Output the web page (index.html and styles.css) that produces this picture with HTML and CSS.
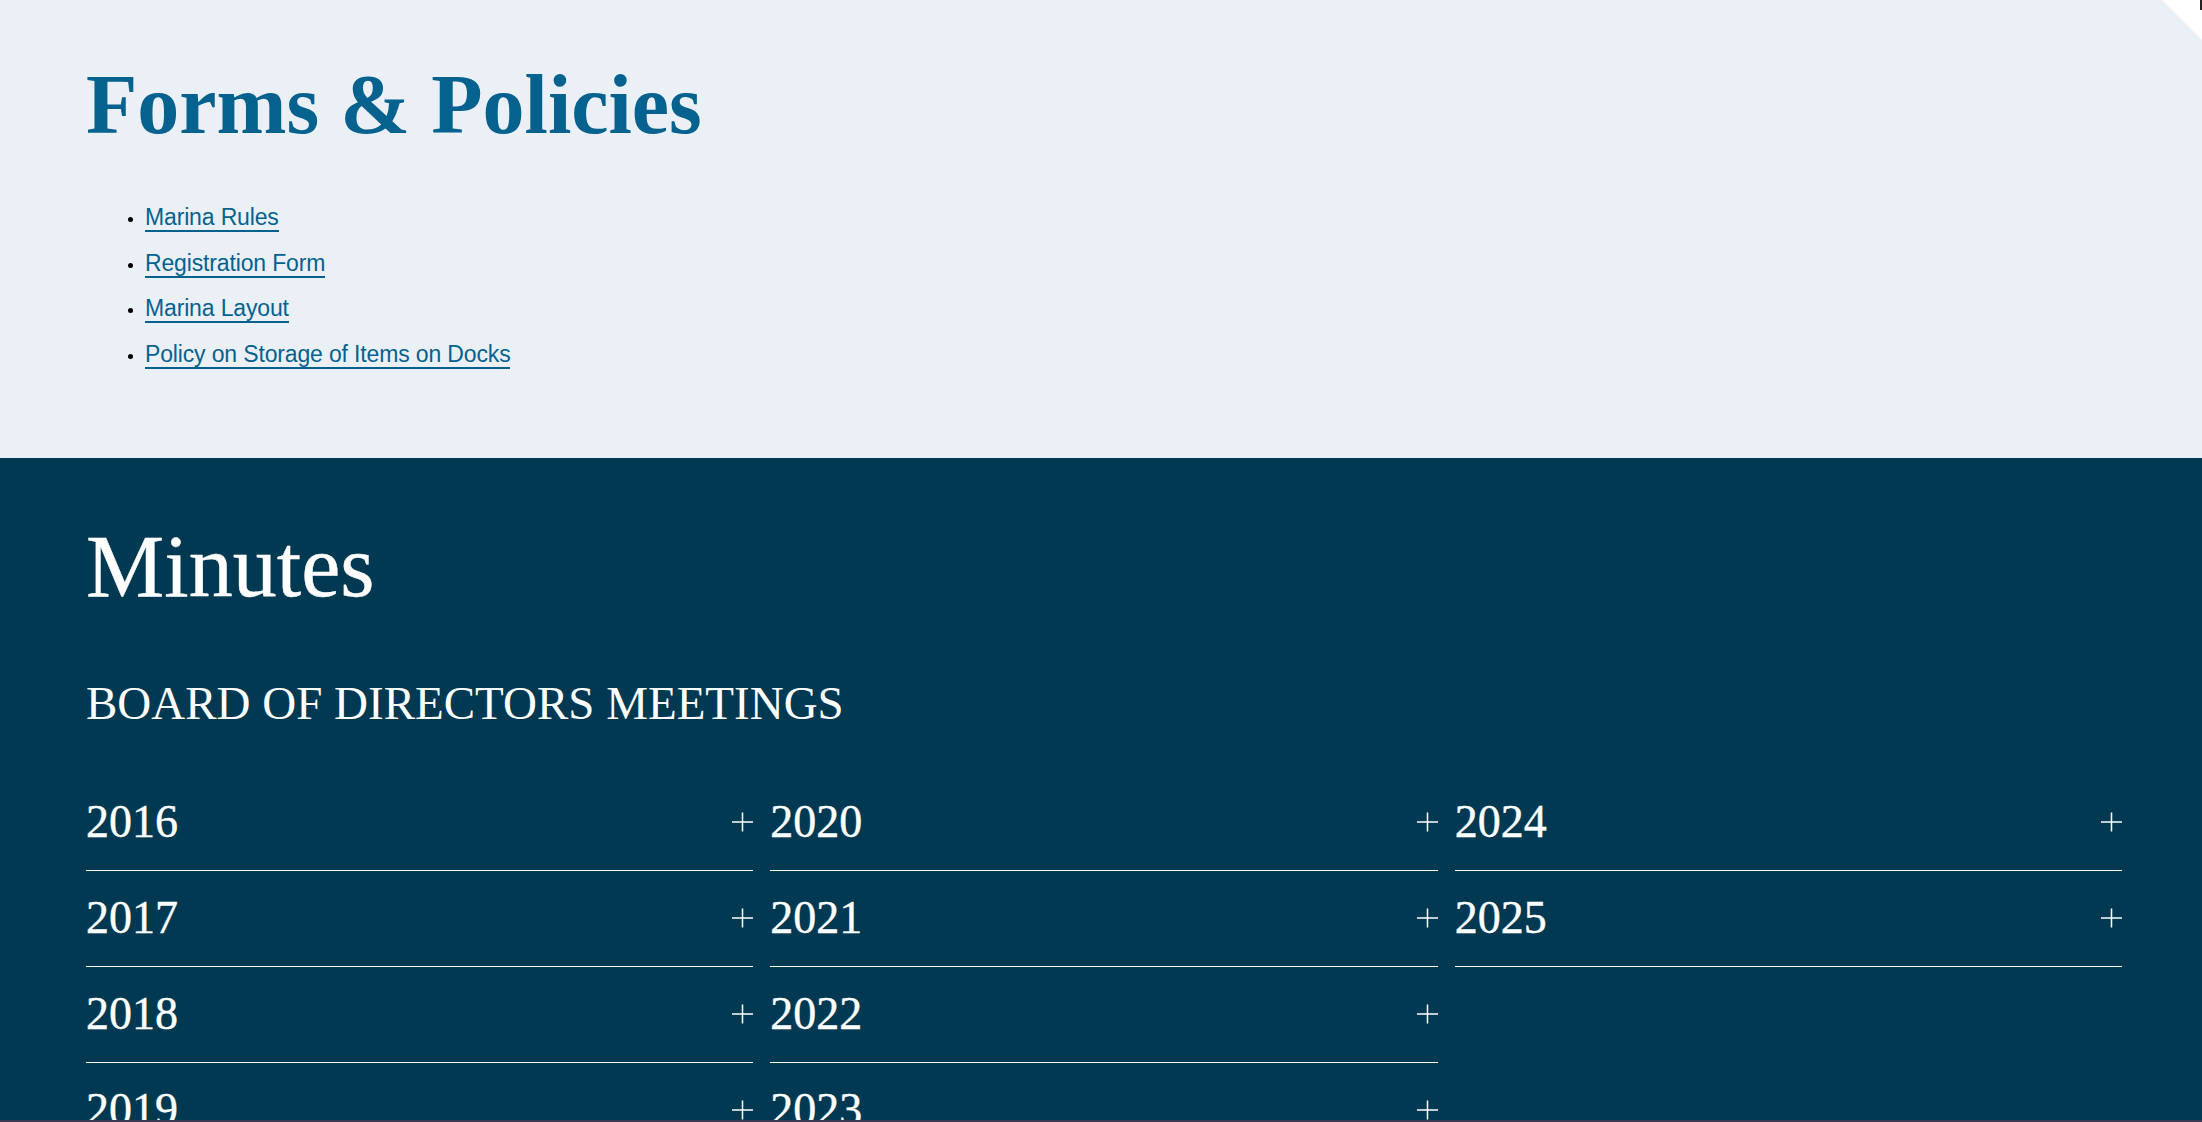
FILE: index.html
```html
<!DOCTYPE html>
<html lang="en">
<head>
<meta charset="utf-8">
<title>Forms &amp; Policies</title>
<link rel="stylesheet" href="styles.css">
</head>
<body>
<section class="forms">
  <h2 class="title title-blue">Forms &amp; Policies</h2>
  <ul class="doc-list">
    <li><a href="#">Marina Rules</a></li>
    <li><a href="#">Registration Form</a></li>
    <li><a href="#">Marina Layout</a></li>
    <li><a href="#">Policy on Storage of Items on Docks</a></li>
  </ul>
</section>
<section class="minutes">
  <h2 class="title">Minutes</h2>
  <h3 class="subtitle">BOARD OF DIRECTORS MEETINGS</h3>
  <div class="years">
    <div class="year-col">
      <div class="year-row"><span class="year">2016</span><svg class="plus" viewBox="0 0 22 20"><path d="M0 10H22M11 0V20"/></svg></div>
      <div class="year-row"><span class="year">2017</span><svg class="plus" viewBox="0 0 22 20"><path d="M0 10H22M11 0V20"/></svg></div>
      <div class="year-row"><span class="year">2018</span><svg class="plus" viewBox="0 0 22 20"><path d="M0 10H22M11 0V20"/></svg></div>
      <div class="year-row"><span class="year">2019</span><svg class="plus" viewBox="0 0 22 20"><path d="M0 10H22M11 0V20"/></svg></div>
    </div>
    <div class="year-col">
      <div class="year-row"><span class="year">2020</span><svg class="plus" viewBox="0 0 22 20"><path d="M0 10H22M11 0V20"/></svg></div>
      <div class="year-row"><span class="year">2021</span><svg class="plus" viewBox="0 0 22 20"><path d="M0 10H22M11 0V20"/></svg></div>
      <div class="year-row"><span class="year">2022</span><svg class="plus" viewBox="0 0 22 20"><path d="M0 10H22M11 0V20"/></svg></div>
      <div class="year-row"><span class="year">2023</span><svg class="plus" viewBox="0 0 22 20"><path d="M0 10H22M11 0V20"/></svg></div>
    </div>
    <div class="year-col">
      <div class="year-row"><span class="year">2024</span><svg class="plus" viewBox="0 0 22 20"><path d="M0 10H22M11 0V20"/></svg></div>
      <div class="year-row"><span class="year">2025</span><svg class="plus" viewBox="0 0 22 20"><path d="M0 10H22M11 0V20"/></svg></div>
    </div>
  </div>
</section>
<div class="corner-curl"></div>
<div class="corner-tab"></div>
<div class="bottom-bar"></div>
</body>
</html>
```
FILE: styles.css
```css
html, body {
  margin: 0;
  padding: 0;
}
body {
  font-family: "Liberation Sans", Arial, sans-serif;
  background: #003951;
}
.forms {
  background: #ebf0f7;
  padding: 63px 80px 81px 86px;
}
.title {
  margin: 0;
  font-family: "Liberation Serif", "Times New Roman", serif;
  font-weight: normal;
  font-size: 88px;
  line-height: 86px;
  color: #ffffff;
  -webkit-text-stroke: 0.4px #ffffff;
}
.title-blue {
  color: #05628f;
  font-weight: bold;
  font-size: 84px;
  line-height: 84px;
  -webkit-text-stroke: 0;
}
.doc-list {
  margin: 48px 0 0 0;
  padding: 0 0 0 59px;
  color: #000;
  font-size: 23px;
  line-height: 45.6px;
}
.doc-list li::marker {
  font-size: 17px;
}
.doc-list a {
  color: #05628f;
  text-decoration: none;
  border-bottom: 2px solid #05628f;
  letter-spacing: -0.15px;
}
.minutes {
  background: #003951;
  padding: 66px 80px 200px 86px;
  color: #fff;
}
.subtitle {
  margin: 70px 0 0 0;
  font-family: "Liberation Serif", "Times New Roman", serif;
  font-weight: normal;
  font-size: 47px;
  line-height: 47px;
}
.years {
  margin-top: 48px;
  display: grid;
  grid-template-columns: repeat(3, 1fr);
  column-gap: 17px;
  align-items: start;
}
.year-row {
  display: flex;
  justify-content: space-between;
  align-items: center;
  padding: 24px 0 26px 0;
  border-bottom: 1px solid #ffffff;
}
.year {
  font-family: "Liberation Serif", "Times New Roman", serif;
  font-size: 46px;
  line-height: 45px;
  -webkit-text-stroke: 0.4px #ffffff;
}
.plus {
  width: 21px;
  height: 20px;
  margin-top: 1px;
  fill: none;
  stroke: #ffffff;
  stroke-width: 1.6;
}
.corner-curl {
  position: absolute;
  top: 0;
  right: 0;
  width: 40px;
  height: 40px;
  background: #ffffff;
  clip-path: polygon(0 0, 100% 0, 100% 100%);
  filter: drop-shadow(-1px 1px 2px rgba(0,0,0,0.15));
}
.corner-tab {
  position: absolute;
  top: 0;
  right: 0;
  width: 2px;
  height: 10px;
  background: #222;
}
.bottom-bar {
  position: fixed;
  left: 0;
  right: 0;
  bottom: 0;
  height: 2px;
  background: #383a52;
}
```
